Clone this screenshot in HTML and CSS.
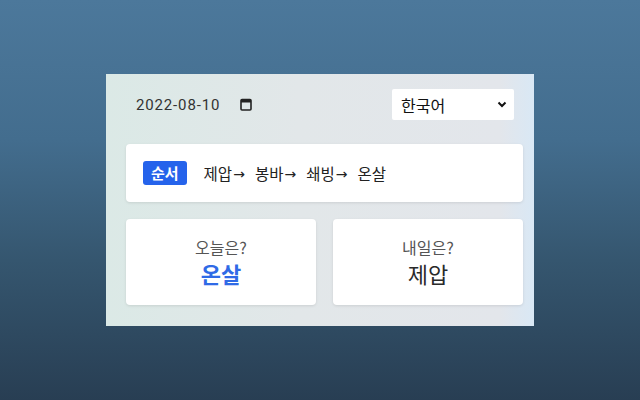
FILE: index.html
```html
<!DOCTYPE html>
<html lang="ko">
<head>
<meta charset="utf-8">
<link rel="stylesheet" href="styles.css">
</head>
<body>
<div class="panel">
  <div class="header">
    <div class="date">
      <span class="date-text">2022-08-10</span>
      <svg class="cal" width="12" height="13" viewBox="0 0 12 13"><rect x="1" y="1.5" width="10" height="10.5" rx="1" fill="none" stroke="#222" stroke-width="1.6"/><rect x="1" y="1.5" width="10" height="3" fill="#222"/></svg>
    </div>
    <div class="select">
      <span>한국어</span>
      <svg width="10" height="7" viewBox="0 0 10 7"><path d="M1.5 1.5 L5 5 L8.5 1.5" fill="none" stroke="#111" stroke-width="2"/></svg>
    </div>
  </div>
  <div class="order">
    <span class="badge">순서</span>
    <div class="seq">
      <span class="step">제압<span class="arrow">→</span></span>
      <span class="step">봉바<span class="arrow">→</span></span>
      <span class="step">쇄빙<span class="arrow">→</span></span>
      <span class="step">온살</span>
    </div>
  </div>
  <div class="cards">
    <div class="card">
      <div class="label">오늘은?</div>
      <div class="value today">온살</div>
    </div>
    <div class="card">
      <div class="label">내일은?</div>
      <div class="value">제압</div>
    </div>
  </div>
</div>
</body>
</html>
```
FILE: styles.css
```css
html, body {
  margin: 0;
  height: 100%;
}
body {
  background: linear-gradient(180deg, #4c789b 0%, #436d8e 35%, #35566f 65%, #283e53 100%);
  font-family: "Noto Sans CJK KR", "Noto Sans", sans-serif;
  overflow: hidden;
}
.panel {
  width: 397px;
  height: 217px;
  margin: 74px auto 0;
  padding: 15px 11px 20px 20px;
  background: linear-gradient(90deg, #dbe9e6 0%, #e2e7e9 45%, #e3e6eb 92%, #d9e8f5 100%);
  display: flex;
  flex-direction: column;
}
.header {
  height: 31px;
  display: flex;
  justify-content: space-between;
  align-items: center;
}
.date {
  display: flex;
  align-items: center;
  margin-left: 10px;
}
.date-text {
  font-family: Roboto, "Noto Sans", sans-serif;
  font-size: 15px;
  letter-spacing: 0.85px;
  color: #333;
}
.cal {
  margin-left: 20px;
  margin-top: -1px;
}
.select {
  width: 122px;
  height: 31px;
  box-sizing: border-box;
  margin-right: 9px;
  background: #fff;
  border-radius: 2px;
  display: flex;
  align-items: center;
  justify-content: space-between;
  padding: 0 7px 0 9px;
  font-size: 16px;
  color: #111;
}
.order {
  margin-top: 24px;
  height: 58px;
  background: #fff;
  border-radius: 4px;
  box-shadow: 0 1px 3px rgba(0, 0, 0, 0.1);
  display: flex;
  align-items: center;
  padding-left: 17px;
}
.badge {
  background: #2563eb;
  color: #fff;
  font-weight: 700;
  font-size: 15px;
  height: 24px;
  line-height: 24px;
  padding: 0 8px;
  border-radius: 3px;
}
.seq {
  margin-left: 17px;
  display: flex;
  gap: 10px;
  font-size: 15.5px;
  color: #222;
}
.arrow {
  font-family: "DejaVu Sans", sans-serif;
  font-size: 14px;
  margin-left: 1px;
  vertical-align: 1px;
}
.cards {
  margin-top: 17px;
  display: grid;
  grid-template-columns: 1fr 1fr;
  gap: 17px;
}
.card {
  height: 86px;
  background: #fff;
  border-radius: 4px;
  box-shadow: 0 1px 3px rgba(0, 0, 0, 0.1);
  display: flex;
  flex-direction: column;
  align-items: center;
  justify-content: center;
}
.label {
  font-size: 16px;
  color: #555;
  line-height: 22px;
}
.value {
  font-size: 22px;
  font-weight: 400;
  color: #2a2a2a;
  line-height: 30px;
}
.value.today {
  color: #2f6ae6;
  font-weight: 700;
}
```
